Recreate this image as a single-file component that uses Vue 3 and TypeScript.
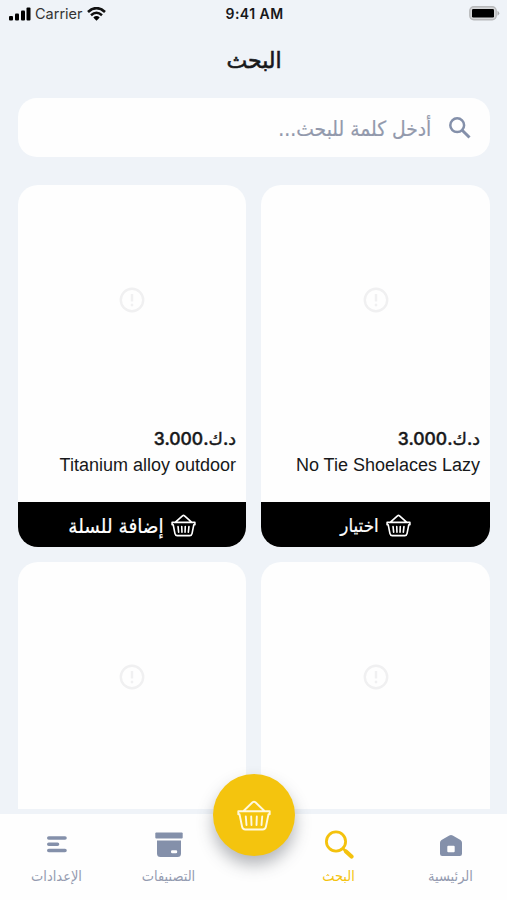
<script setup lang="ts">
interface Product {
  id: number
  price: string
  name: string
  action: string
  kind: string
}

const products: Product[] = [
  { id: 1, price: 'د.ك.3.000', name: 'No Tie Shoelaces Lazy', action: 'اختيار', kind: 'choose' },
  { id: 2, price: 'د.ك.3.000', name: 'Titanium alloy outdoor', action: 'إضافة للسلة', kind: 'add' },
  { id: 3, price: '', name: '', action: '', kind: '' },
  { id: 4, price: '', name: '', action: '', kind: '' },
]
</script>

<template>
  <div class="screen" dir="rtl">
    <header class="status" dir="ltr">
      <div class="carrier">
        <svg width="23" height="14" viewBox="0 0 23 14">
          <rect x="0" y="9" width="4" height="4.6" rx="1" />
          <rect x="6" y="6.5" width="4" height="7.1" rx="1" />
          <rect x="12" y="3.5" width="4" height="10.1" rx="1" />
          <rect x="17.500" y="0.500" width="4" height="13.1" rx="1" />
        </svg>
        <span class="carrier-name">Carrier</span>
        <svg width="19" height="14" viewBox="0 0 19 14">
          <path d="M1 4.9Q9.500-2.500 18 4.900" fill="none" stroke="#111" stroke-width="2.700" />
          <path d="M4 8.200Q9.500 3.300 15 8.200" fill="none" stroke="#111" stroke-width="2.500" />
          <path d="M6.300 10.500Q9.500 7.700 12.700 10.500L9.500 13.700Z" />
        </svg>
      </div>
      <span class="time">9:41 AM</span>
      <svg class="battery" width="31" height="15" viewBox="0 0 31 15">
        <rect x="0.800" y="0.800" width="26.400" height="13" rx="4" fill="#d5d6d8" stroke="#b8b9bb" stroke-width="1.400" />
        <rect x="3" y="3" width="22" height="8.600" rx="1.300" />
        <path d="M28.500 4.800Q32 7.300 28.500 9.800Z" fill="#a9aaac" />
      </svg>
    </header>

    <h1 class="title"><span>البحث</span></h1>

    <div class="search">
      <svg width="24" height="24" viewBox="0 0 24 24" fill="none" stroke="#8490aa">
        <circle cx="9.200" cy="9.200" r="6.900" stroke-width="2.500" />
        <path d="M14.200 14.200L21.500 21.500" stroke-width="3" />
      </svg>
      <span class="placeholder">أدخل كلمة للبحث...</span>
    </div>

    <main class="grid">
      <article v-for="p in products" :key="p.id" class="card">
        <div class="photo">
          <svg width="26" height="26" viewBox="0 0 26 26" fill="none" stroke="#f0f0f1" stroke-width="2.400">
            <circle cx="13" cy="13" r="11.200" />
            <path d="M13 7v7.500M13 16.800v2.400" />
          </svg>
        </div>
        <template v-if="p.name">
          <div class="info">
            <div class="price"><span>{{ p.price }}</span></div>
            <div class="name" dir="ltr">{{ p.name }}</div>
          </div>
          <button class="action" :class="p.kind">
            <svg width="25" height="23" viewBox="0 0 34 31" fill="none" stroke="#fff" stroke-width="2.200" stroke-linecap="round" stroke-linejoin="round">
              <path d="M6 11L15.600 2.300Q17 1.200 18.400 2.300L28 11M1.500 11.300H32.500V14.500H31L28.600 26.500Q28 29.300 25.500 29.300H8.500Q6 29.300 5.400 26.500L3 14.500H1.500ZM9.600 17L10.400 24.500M14.600 17L14.900 24.500M19.400 17L19.100 24.500M24.400 17L23.600 24.500" />
            </svg>
            <span>{{ p.action }}</span>
          </button>
        </template>
      </article>
    </main>

    <nav class="tabs">
      <div class="tab home">
        <svg width="30" height="30" viewBox="0 0 30 30">
          <path fill="#8490aa" fill-rule="evenodd" d="M13.300 5.500Q15 4.400 16.700 5.500L24.500 10Q26 11 26 12.700V23.800Q26 26 23.800 26H6.200Q4 26 4 23.800V12.700Q4 11 5.500 10ZM12.300 15.700Q11.300 15.700 11.300 16.700V21.300Q11.300 22.300 12.300 22.300H17.700Q18.700 22.300 18.700 21.300V16.700Q18.700 15.700 17.700 15.700Z" />
        </svg>
        <span>الرئيسية</span>
      </div>
      <div class="tab find">
        <svg width="30" height="30" viewBox="0 0 30 30" fill="none" stroke="#f4c20d">
          <circle cx="12" cy="11.500" r="9.600" stroke-width="2.800" />
          <path d="M18.500 18L22 21.500" stroke-width="2.500" />
          <path d="M22 21.500L27.500 26.500" stroke-width="4.200" stroke-linecap="round" />
        </svg>
        <span>البحث</span>
      </div>
      <div class="basket">
        <svg width="34" height="31" viewBox="0 0 34 31" fill="none" stroke="#fff9df" stroke-width="1.900" stroke-linecap="round" stroke-linejoin="round">
          <path d="M6.500 11L15.600 2.300Q17 1.200 18.400 2.300L27.500 11M1.300 11.300H32.700V14.300H31.500L28.900 26.800Q28.300 29.500 25.700 29.500H8.300Q5.700 29.500 5.100 26.800L2.500 14.300H1.300ZM8.800 16.500L9.500 25M14.200 16.500L14.500 25M19.800 16.500L19.500 25M25.200 16.500L24.500 25" />
        </svg>
      </div>
      <div class="tab categories">
        <svg width="30" height="30" viewBox="0 0 30 30" fill="#8490aa">
          <rect x="1.300" y="2.500" width="27.400" height="6" rx="1" />
          <path fill-rule="evenodd" d="M3 10.500H27V23.500Q27 27 23.500 27H6.500Q3 27 3 23.500ZM18.200 20.200Q17 20.200 17 21.400V22.100Q17 23.300 18.200 23.300H22Q23.200 23.300 23.200 22.100V21.400Q23.200 20.200 22 20.200Z" />
        </svg>
        <span>التصنيفات</span>
      </div>
      <div class="tab settings">
        <svg width="30" height="30" viewBox="0 0 30 30" fill="none" stroke="#8490aa" stroke-width="3.600" stroke-linecap="round">
          <path d="M6.800 8H23M6.800 14.300H15.500M6.800 20.500H23" />
        </svg>
        <span>الإعدادات</span>
      </div>
    </nav>
  </div>
</template>

<style>
body {
  margin: 0;
  background: #eff3f8;
}
</style>

<style scoped>
.screen {
  width: 507px;
  height: 900px;
  overflow: hidden;
  display: flex;
  flex-direction: column;
  background: #eff3f8;
  color: #17181a;
  font-family: "DejaVu Sans", sans-serif;
}
.screen * {
  box-sizing: border-box;
}
.screen svg {
  display: block;
  flex: none;
}
.status {
  height: 27px;
  flex: none;
  display: grid;
  grid-template-columns: 1fr auto 1fr;
  align-items: center;
  padding: 0 7px 0 9px;
  font-family: Inter, sans-serif;
  font-size: 14.5px;
}
.carrier {
  display: flex;
  align-items: center;
  gap: 3px;
}
.carrier-name {
  width: 49px;
  color: #333;
}
.time {
  font-weight: 600;
  font-size: 14px;
  letter-spacing: 0.45px;
}
.battery {
  justify-self: end;
}
.title {
  height: 71px;
  flex: none;
  margin: 0;
  display: flex;
  justify-content: center;
  padding: 18px 0 0 1px;
  font-size: 22px;
  line-height: 32px;
  font-weight: 400;
  -webkit-text-stroke: 0.6px #17181a;
}
.search {
  height: 59px;
  flex: none;
  margin: 0 17px 0 18px;
  padding: 0 18px;
  border-radius: 19px;
  background: #fefefe;
  display: flex;
  align-items: center;
  gap: 17px;
  color: #9299ac;
  font-size: 19px;
}
.placeholder {
  display: block;
  transform: scale(0.985, 1.1);
  transform-origin: right center;
  -webkit-text-stroke: 0.2px #9299ac;
}
.grid {
  height: 624px;
  margin: 28px 17px 0 18px;
  overflow: hidden;
  flex: none;
  display: grid;
  grid-template-columns: 229px 228px;
  grid-auto-rows: 362px;
  gap: 15px;
}
.card {
  border-radius: 20px;
  background: #fefefe;
  overflow: hidden;
  display: flex;
  flex-direction: column;
}
.photo {
  height: 229px;
  flex: none;
  display: flex;
  align-items: center;
  justify-content: center;
}
.info {
  height: 88px;
  flex: none;
  padding: 12px 10px 0;
}
.price {
  height: 26px;
  line-height: 26px;
  font-family: Inter, "DejaVu Sans", sans-serif;
  font-size: 17.5px;
  font-weight: 500;
  -webkit-text-stroke: 0.4px #17181a;
}
.name {
  height: 26px;
  line-height: 26px;
  font-family: "Liberation Sans", sans-serif;
  font-size: 18px;
  text-align: right;
  white-space: nowrap;
}
.action {
  height: 45px;
  flex: none;
  border: 0;
  padding: 1px 0 0;
  background: #000;
  color: #fff;
  font-family: inherit;
  font-size: 16.8px;
  display: flex;
  align-items: center;
  justify-content: center;
  gap: 7px;
  -webkit-text-stroke: 0.2px #fff;
}
.action span {
  transform: scaleY(1.1);
}
.add {
  font-size: 18.5px;
}
.tabs {
  height: 86px;
  flex: none;
  margin-top: 5px;
  background: #fefefe;
  display: grid;
  grid-template-columns: 112px 112px 58px 112px 112px;
  justify-content: center;
}
.tab {
  display: flex;
  flex-direction: column;
  align-items: center;
  padding-top: 16px;
  color: #949bb0;
  font-size: 13px;
  line-height: 20px;
  gap: 7px;
  white-space: nowrap;
}
.tab span {
  transform: scaleY(1.08);
}
.find {
  color: #f4c20d;
}
.basket {
  width: 82px;
  height: 82px;
  margin-top: -40px;
  border-radius: 50%;
  background: #f4c40e;
  box-shadow: 0 9px 16px rgba(60, 65, 75, 0.38);
  display: flex;
  align-items: center;
  justify-content: center;
  justify-self: center;
}
</style>
